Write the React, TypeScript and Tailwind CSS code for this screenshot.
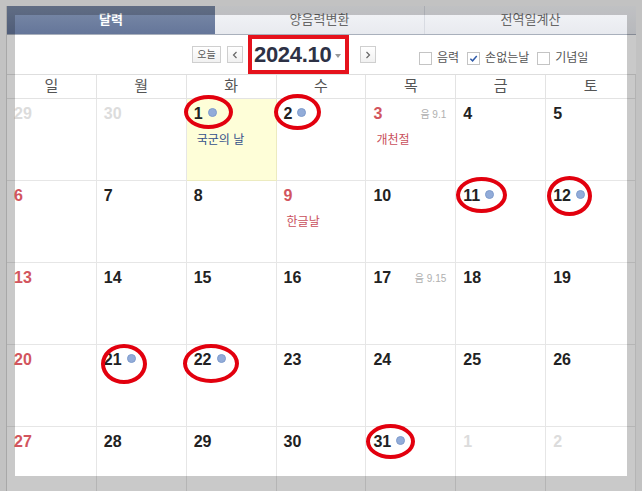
import React from 'react';

type Day = {
  d: number;
  muted?: boolean;
  red?: boolean;
  today?: boolean;
  dot?: boolean;
  lunar?: string;
  note?: string;
  noteColor?: string;
  ring?: { l: number; t: number; w: number; h: number };
};

const weeks: Day[][] = [
  [
    { d: 29, muted: true },
    { d: 30, muted: true },
    { d: 1, today: true, dot: true, note: '국군의 날', noteColor: 'text-[#34508a]', ring: { l: -3, t: -4, w: 49, h: 34 } },
    { d: 2, dot: true, ring: { l: -3, t: -5, w: 47, h: 36 } },
    { d: 3, red: true, lunar: '음 9.1', note: '개천절', noteColor: 'text-[#c9505c]' },
    { d: 4 },
    { d: 5 },
  ],
  [
    { d: 6, red: true },
    { d: 7 },
    { d: 8 },
    { d: 9, red: true, note: '한글날', noteColor: 'text-[#c9505c]' },
    { d: 10 },
    { d: 11, dot: true, ring: { l: 0, t: -4, w: 51, h: 36 } },
    { d: 12, dot: true, ring: { l: 1, t: -5, w: 45, h: 40 } },
  ],
  [
    { d: 13, red: true },
    { d: 14 },
    { d: 15 },
    { d: 16 },
    { d: 17, lunar: '음 9.15' },
    { d: 18 },
    { d: 19 },
  ],
  [
    { d: 20, red: true },
    { d: 21, dot: true, ring: { l: 4, t: -1, w: 46, h: 40 } },
    { d: 22, dot: true, ring: { l: -4, t: -1, w: 56, h: 39 } },
    { d: 23 },
    { d: 24 },
    { d: 25 },
    { d: 26 },
  ],
  [
    { d: 27, red: true },
    { d: 28 },
    { d: 29 },
    { d: 30 },
    { d: 31, dot: true, ring: { l: 0, t: -3, w: 49, h: 35 } },
    { d: 1, muted: true },
    { d: 2, muted: true },
  ],
];

const weekdays = ['일', '월', '화', '수', '목', '금', '토'];

function Check({ checked, label }: { checked?: boolean; label: string }) {
  return (
    <label className="flex items-center gap-[5px] text-[12px] text-[#555]">
      <span className="flex h-[13px] w-[13px] items-center justify-center border border-[#c4c4c4] bg-white">
        {checked && (
          <svg viewBox="0 0 10 10" className="h-[9px] w-[9px]">
            <path d="M1.5 5.2 L4 7.6 L8.6 2.2" fill="none" stroke="#2f5aa8" strokeWidth="1.6" />
          </svg>
        )}
      </span>
      {label}
    </label>
  );
}

function ArrowBtn({ dir }: { dir: 'l' | 'r' }) {
  return (
    <button className="flex h-[17px] w-[16px] items-center justify-center border border-[#cfcfcf] bg-gradient-to-b from-white to-[#f1f1f1]">
      <svg viewBox="0 0 8 10" className="h-[8px] w-[6px]">
        <path d={dir === 'l' ? 'M6 1 L2 5 L6 9' : 'M2 1 L6 5 L2 9'} fill="none" stroke="#666" strokeWidth="1.6" />
      </svg>
    </button>
  );
}

function Cell({ day }: { day: Day }) {
  const color = day.muted ? 'text-[#dcdcdc]' : day.red ? 'text-[#d2555e]' : 'text-[#222]';
  return (
    <div className={`relative h-[82px] border-r border-b ${day.today ? 'border-[#ecebc0] bg-[#fefed8]' : 'border-[#e6e6e6]'} px-[7px] pt-[6px]`}>
      <div className="flex items-center">
        <span className={`text-[16px] leading-[18px] font-bold ${color}`}>{day.d}</span>
        {day.dot && (
          <span className="ml-[5px] -mt-[3px] h-[9px] w-[9px] rounded-full border border-[#7f9ccc] bg-[#92acd9]" />
        )}
        {day.lunar && <span className="ml-auto mr-[2px] text-[10px] text-[#b0b0b0]">{day.lunar}</span>}
      </div>
      {day.note && <div className={`mt-[8px] pl-[3px] text-[12px] ${day.noteColor}`}>{day.note}</div>}
      {day.ring && (
        <span
          className="pointer-events-none absolute rounded-[50%] border-[4px] border-[#e2000e]"
          style={{ left: day.ring.l, top: day.ring.t, width: day.ring.w, height: day.ring.h }}
        />
      )}
    </div>
  );
}

export default function App() {
  return (
    <div
      className="relative h-[491px] w-[642px] overflow-hidden bg-[#f6f6f6] pl-[6px] pt-[6px]"
      style={{ fontFamily: '"Liberation Sans", "Noto Sans CJK KR", sans-serif' }}
    >
      <div className="w-[630px] border-l border-[#d6d6d6] bg-white">
        {/* Tabs */}
        <div className="flex h-[29px] border-b border-[#a9b0bc] text-[13px]">
          <div className="flex w-[208px] items-center justify-center bg-gradient-to-b from-[#7b8ba8] to-[#65769a] font-bold text-white">
            달력
          </div>
          <div className="flex w-[210px] items-center justify-center border-r border-[#d8dbe2] bg-gradient-to-b from-[#f4f5f8] to-[#e8eaef] text-[#666]">
            양음력변환
          </div>
          <div className="flex flex-1 items-center justify-center bg-gradient-to-b from-[#f4f5f8] to-[#e8eaef] text-[#666]">
            전역일계산
          </div>
        </div>

        {/* Controls */}
        <div className="flex h-[40px] items-center border-b border-[#dedede] pl-[185px]">
          <button className="flex h-[17px] w-[29px] items-center justify-center border border-[#cfcfcf] bg-gradient-to-b from-white to-[#f1f1f1] text-[10px] text-[#555]">
            오늘
          </button>
          <div className="ml-[6px]">
            <ArrowBtn dir="l" />
          </div>
          <div className="ml-[5px] flex h-[39px] w-[101px] items-center border-[4px] border-[#e5121c] pl-[2px]">
            <span className="text-[22px] font-bold tracking-[-0.3px] text-[#2d3145]">2024.10</span>
            <svg viewBox="0 0 6 4" className="ml-[4px] mt-[2px] h-[4px] w-[6px]">
              <path d="M0 0 L6 0 L3 4 Z" fill="#999" />
            </svg>
          </div>
          <div className="ml-[11px]">
            <ArrowBtn dir="r" />
          </div>
          <div className="ml-[43px] mt-[7px] flex items-center gap-[8px]">
            <Check label="음력" />
            <Check checked label="손없는날" />
            <Check label="기념일" />
          </div>
        </div>

        {/* Weekday header */}
        <div className="grid grid-cols-7">
          {weekdays.map((w) => (
            <div key={w} className="flex h-[24px] items-center justify-center border-r border-b border-[#e3e3e3] text-[15px] text-[#555]">
              {w}
            </div>
          ))}
        </div>

        {/* Weeks */}
        {weeks.map((week, i) => (
          <div key={i} className="grid grid-cols-7">
            {week.map((day, j) => (
              <Cell key={j} day={day} />
            ))}
          </div>
        ))}
      </div>

      {/* translucent frame from the screenshot */}
      <div className="pointer-events-none absolute inset-0 border-[15px] border-black/[0.21]" />
    </div>
  );
}
